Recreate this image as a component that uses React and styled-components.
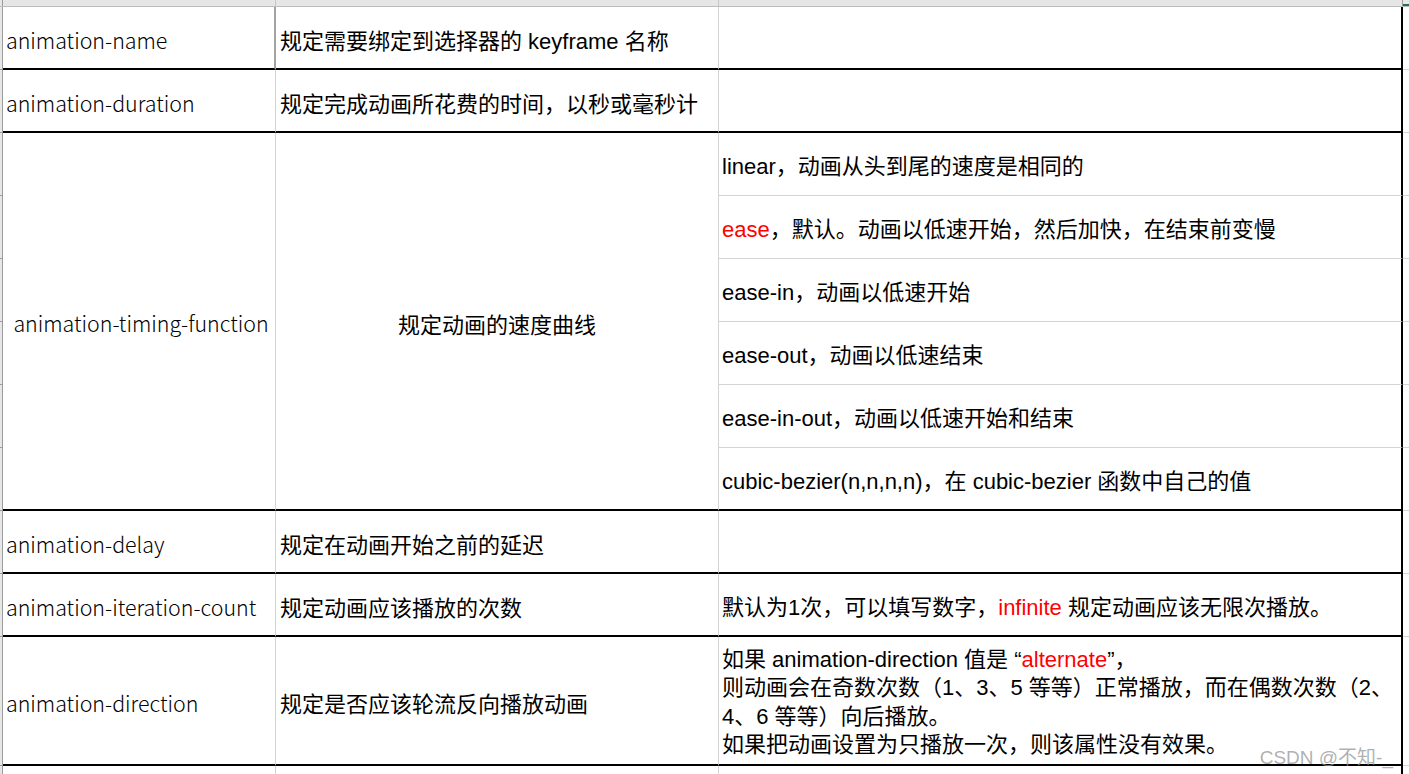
import React from "react";
import styled, {createGlobalStyle} from "styled-components";

const GlobalStyle = createGlobalStyle`
  html, body {
    margin: 0;
    padding: 0;
    background: #fff;
  }
  * { box-sizing: border-box; }
`

const Red = styled.span`
  color: #ff0000;
`

function getRows(){
  return [
    {name: 'animation-name', desc: '规定需要绑定到选择器的 keyframe 名称', values: [null]},
    {name: 'animation-duration', desc: '规定完成动画所花费的时间，以秒或毫秒计', values: [null]},
    {
      name: 'animation-timing-function',
      desc: '规定动画的速度曲线',
      center: true,
      values: [
        <>linear，动画从头到尾的速度是相同的</>,
        <><Red>ease</Red>，默认。动画以低速开始，然后加快，在结束前变慢</>,
        <>ease-in，动画以低速开始</>,
        <>ease-out，动画以低速结束</>,
        <>ease-in-out，动画以低速开始和结束</>,
        <>cubic-bezier(n,n,n,n)，在 cubic-bezier 函数中自己的值</>,
      ],
    },
    {name: 'animation-delay', desc: '规定在动画开始之前的延迟', values: [null]},
    {
      name: 'animation-iteration-count',
      desc: '规定动画应该播放的次数',
      values: [<>默认为1次，可以填写数字，<Red>infinite</Red> 规定动画应该无限次播放。</>],
    },
    {
      name: 'animation-direction',
      desc: '规定是否应该轮流反向播放动画',
      tall: true,
      values: [
        <>
          如果 animation-direction 值是 “<Red>alternate</Red>”，<br/>
          则动画会在奇数次数（1、3、5 等等）正常播放，而在偶数次数（2、<br/>
          4、6 等等）向后播放。<br/>
          如果把动画设置为只播放一次，则该属性没有效果。
        </>,
      ],
    },
  ]
}

export default function App(){
  let rows = getRows()
  let line = 1
  return(
    <Page>
      <GlobalStyle/>
      <HeadBand>
        <HeadCell w='3px' $dark/>
        <HeadCell w='273px'/>
        <HeadCell w='443px'/>
        <HeadCell w='684px' $dark/>
        <HeadCell w='7px' $active/>
      </HeadBand>
      <Sheet>
        {rows.map((r, i) => {
          let start = line
          let span = r.values.length
          line += span
          let rowStyle = {gridRow: `${start} / span ${span}`}
          return(
            <React.Fragment key={i}>
              {r.values.map((v, j) => (
                <RowHead key={'h'+j} style={{gridRow: start + j}}/>
              ))}
              <NameCell style={rowStyle} $center={r.center} $first={i == 0}>
                <span>{r.name}</span>
              </NameCell>
              <DescCell style={rowStyle} $center={r.center}>
                <span>{r.desc}</span>
              </DescCell>
              {r.values.map((v, j) => (
                <ValueCell key={'v'+j} style={{gridRow: start + j}}
                  $last={j == span - 1} $tall={r.tall}>
                  {v && <ValueText $tall={r.tall}>{v}</ValueText>}
                </ValueCell>
              ))}
              {r.values.map((v, j) => (
                <Tail key={'t'+j} style={{gridRow: start + j}}/>
              ))}
            </React.Fragment>
          )
        })}
        <RowHead style={{gridRow: line}}/>
        <Spare/>
        <Spare/>
        <Spare $end/>
        <Tail style={{gridRow: line}}/>
      </Sheet>
      <Watermark>CSDN @不知-_</Watermark>
    </Page>
  )
}

const Page = styled.div`
  position: relative;
  width: 100%;
  height: 774px;
  overflow: hidden;
  background: #fff;
`

const HeadBand = styled.div`
  display: flex;
  height: 7px;
  background: #e6e6e6;
  border-bottom: 1px solid #bdbdbd;
`

const HeadCell = styled.div`
  flex: 0 0 ${props => props.w};
  border-right: 1px solid ${props => props.$dark ? '#9c9c9c' : '#c6c6c6'};
  border-bottom: ${props => props.$active ? '2px solid #217346' : 'none'};
  &:last-child { flex: 1; border-right: none; }
`

const Sheet = styled.div`
  display: grid;
  grid-template-columns: 3px 273px 443px 684px 1fr;
  grid-template-rows: repeat(10, 63px) 129px 40px;
`

const RowHead = styled.div`
  grid-column: 1;
  background: #e6e6e6;
  border-right: 1px solid #9c9c9c;
  border-bottom: 1px solid #9c9c9c;
`

const Cell = styled.div`
  display: flex;
  align-items: center;
  padding-top: 3px;
  border-bottom: 2px solid #000;
  border-right: 1px solid #d4d4d4;
  color: #000;
  white-space: nowrap;
  overflow: hidden;
`

const NameCell = styled(Cell)`
  grid-column: 2;
  justify-content: ${props => props.$center ? 'center' : 'flex-start'};
  padding-left: ${props => props.$center ? '4px' : '3px'};
  font-family: "Noto Sans CJK SC", sans-serif;
  font-size: 21.4px;
  font-weight: 300;
  border-right-color: ${props => props.$first ? '#a3a3a3' : '#d4d4d4'};
  border-right-width: ${props => props.$first ? '2px' : '1px'};
`

const DescCell = styled(Cell)`
  grid-column: 3;
  justify-content: ${props => props.$center ? 'center' : 'flex-start'};
  padding-left: ${props => props.$center ? '0' : '4px'};
  font-family: "Liberation Sans", "Noto Sans CJK SC", sans-serif;
  font-size: 22px;
`

const ValueCell = styled(Cell)`
  grid-column: 4;
  padding-left: 3px;
  padding-top: ${props => props.$tall ? '4px' : '0'};
  font-family: "Liberation Sans", "Noto Sans CJK SC", sans-serif;
  font-size: 22px;
  border-right: 2px solid #000;
  border-bottom: ${props => props.$last ? '2px solid #000' : '1px solid #d4d4d4'};
`

const ValueText = styled.div`
  line-height: ${props => props.$tall ? '28.5px' : 'normal'};
`

const Tail = styled.div`
  grid-column: 5;
  border-bottom: 1px solid #d4d4d4;
`

const Spare = styled.div`
  border-right: ${props => props.$end ? '2px solid #000' : '1px solid #d4d4d4'};
`

const Watermark = styled.div`
  position: absolute;
  right: 16px;
  bottom: 5px;
  font-family: "Liberation Sans", "Noto Sans CJK SC", sans-serif;
  font-size: 19px;
  color: rgba(150, 150, 150, 0.75);
  pointer-events: none;
`
